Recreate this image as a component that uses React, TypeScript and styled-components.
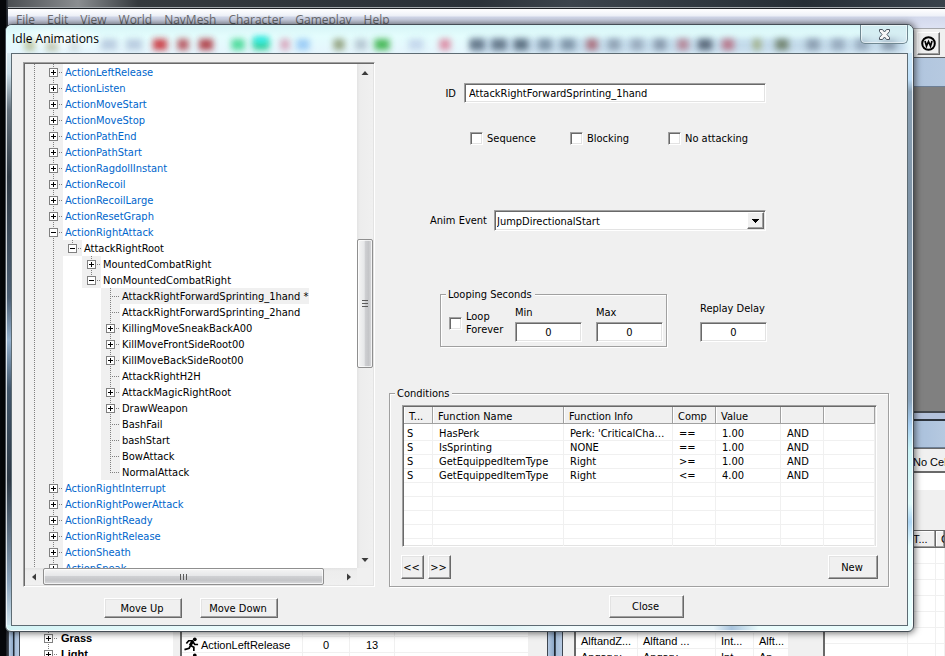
import React from 'react';
import styled, { createGlobalStyle, css } from 'styled-components';

const tahoma = '"DejaVu Sans Condensed", Tahoma, sans-serif';
const segoe = '"Open Sans", "Segoe UI", sans-serif';
const msSans = '"Liberation Sans", Arial, sans-serif';

const Global = createGlobalStyle`
  *, *::before, *::after { box-sizing: border-box; }
  html, body { margin: 0; height: 100%; background: #0b0d10; }
  #root { height: 100%; }
  body { overflow: hidden; font: 11px/13px ${tahoma}; color: #000; }
  button, input, select { font: inherit; color: inherit; margin: 0; }
`;

const sunken = css`
  border: 1px solid;
  border-color: #a0a0a0 #fff #fff #a0a0a0;
  box-shadow: inset 1px 1px 0 #696969, inset -1px -1px 0 #e3e3e3;
`;

/* ---------- Editor behind the dialog ---------- */

const Desktop = styled.main`
  position: relative;
  height: 100%;
  min-height: 600px;
  overflow: hidden;
  display: flex;
  background: linear-gradient(90deg, #05070a 0 6px, #3a4049 7px, #23282d 8px);
`;

const Editor = styled.div`
  flex: 1;
  min-width: 0;
  margin-left: 8px;
  display: flex;
  flex-direction: column;
  font: 11px/14px ${msSans};
`;

const TitleEdge = styled.div`
  height: 8px;
  border-bottom: 1px solid #a3a8ac;
  background: linear-gradient(90deg, #4a4e52, #8b8e91 70px, #34393d 130px, #2a3138 50%, #3c444c 60%, #262e35 85%, #39424b);
`;

const MenuBar = styled.nav`
  height: 20px;
  border-top: 1px solid #1e2226;
  padding: 1px 0 0 8px;
  display: flex;
  gap: 12px;
  background: linear-gradient(#ffffff, #eef1f8 7px, #d3d9ec 8px, #dde2f3);
`;

const MenuButton = styled.button`
  border: 0;
  padding: 0;
  background: none;
  font: 12px/17px ${segoe};
  color: #6c6d70;
`;

const ToolStrip = styled.div`
  height: 30px;
  border-top: 1px solid #a6a8ac;
  border-bottom: 1px solid #5f6266;
  background: #f0f0f0;
  display: flex;
  justify-content: flex-end;
  align-items: center;
  gap: 3px;
  padding-right: 5px;
`;

const ToolButton = styled.button`
  width: 23px;
  height: 23px;
  padding: 0;
  border: 1px solid;
  border-color: #fff #696969 #696969 #fff;
  box-shadow: inset -1px -1px 0 #a0a0a0;
  background: #f0f0f0;
  display: grid;
  place-items: center;
`;

const ChildTitle = styled.div<{ $h: number }>`
  flex: none;
  height: ${p => p.$h}px;
  border-bottom: 1px solid #6d7f96;
  background: linear-gradient(90deg, #b9cadf, #adc3dd 95%, #b6c9e0);
`;

const RenderArea = styled.div`
  flex: none;
  height: 324px;
  background: #808080;
`;

const Divider = styled.div`
  flex: none;
  height: 10px;
  border-top: 2px solid #44484e;
  border-bottom: 2px solid #2d343d;
  background: #b4c2dc;
`;

const LowerPanes = styled.div`
  flex: 1;
  min-height: 0;
  display: flex;
`;

const FrameEdge = styled.div<{ $w: number }>`
  flex: none;
  width: ${p => p.$w}px;
  border: solid #3e4650;
  border-width: 0 1px;
  background: linear-gradient(90deg, #b5c9e2, #8ea9c8 40%, #1f2833 45% 52%, #a5bdd8 58%, #b7cae2);
`;

const ObjectPane = styled.section`
  flex: 0 0 527px;
  display: flex;
  background: #f0f0f0;
`;

const ObjectTree = styled.ul`
  flex: 0 0 153px;
  margin: 0;
  padding: 209px 0 0;
  list-style: none;
  background: #fff;
  font-weight: bold;
`;

const ObjectItem = styled.li`
  height: 16px;
  display: flex;
  align-items: center;
  padding-left: 19px;
  gap: 3px;
  white-space: nowrap;
`;

const ObjectTable = styled.table<{ $top: number }>`
  table-layout: fixed;
  border-collapse: separate;
  border-spacing: 0;
  width: 100%;
  margin-top: ${p => p.$top}px;
  th, td {
    height: 16px;
    padding: 0 0 0 5px;
    border: solid #f0f0f0;
    border-width: 0 1px 1px 0;
    font-weight: normal;
    text-align: left;
    white-space: nowrap;
    overflow: hidden;
    line-height: 14px;
  }
`;

const ListWell = styled.div<{ $w?: number; $ml?: number }>`
  flex: ${p => (p.$w ? `0 0 ${p.$w}px` : '1')};
  min-width: 0;
  margin-left: ${p => p.$ml ?? 0}px;
  border-left: 2px solid #696969;
  background: #fff;
  overflow: hidden;
`;

const ObjCell = styled.td<{ $center?: boolean }>`
  && { text-align: ${p => (p.$center ? 'center' : 'left')}; padding-left: ${p => (p.$center ? 0 : 1)}px; }
`;

const RunnerLabel = styled.span`
  display: flex;
  align-items: center;
  gap: 1px;
`;

const CellPane = styled.section`
  flex: 1;
  min-width: 0;
  display: flex;
  flex-direction: column;
  background: #f0f0f0;
`;

const CellInfo = styled.div`
  flex: none;
  height: 25px;
  border: solid #696969;
  border-width: 1px 0 2px;
  padding: 6px 0 0 350px;
  white-space: nowrap;
`;

const CellFilter = styled.div`
  flex: none;
  height: 58px;
  border-top: 17px solid #fff;
  border-bottom: 1px solid #696969;
`;

const CellLists = styled.div`
  flex: 1;
  min-height: 0;
  display: flex;
`;

const RefHead = styled.th`
  &&& {
    height: 17px;
    border-color: #696969;
    background: #f0f0f0;
    box-shadow: inset -1px -1px 0 #a0a0a0, inset 1px 1px 0 #fff;
    padding-left: 5px;
  }
`;

/* ---------- Dialog frame ---------- */

const Dialog = styled.section`
  position: absolute;
  inset: 24px 31px 24px 5px;
  border: 1px solid #454d55;
  border-radius: 7px 7px 6px 6px;
  box-shadow: 0 0 7px 1px rgba(0, 0, 0, 0.6), inset 0 0 0 1px rgba(255, 255, 255, 0.75);
  padding: 0 5px 5px;
  display: flex;
  flex-direction: column;
  overflow: hidden;
  background:
    linear-gradient(90deg, #d3f3f5, #e8fafb 20%, #f8ffff 45%, #dff3f6 55%, #f4fcfd 62%, #e9f6fb 78%, #a9c4dd 80%, #eafcfc 83%) bottom / 100% 6px no-repeat,
    linear-gradient(#d9f1f7, #bfe0fb 9%, #8aa0b3 11%, #7e93a6 30%, #8aa5bd 62%, #a6cdf0 66%, #c8f3f6 70%, #dffbfb 79%, #add5f3 82%, #e6ffff 86%) right / 6px 100% no-repeat,
    linear-gradient(#eefbfd, #c9dde8 8%, #66737f 14%, #2f3a45 25%, #4c5f74 45%, #93b0cd 52%, #41566b 60%, #2c3845 75%, #8ba4bd 92%, #d9eef5) left / 6px 100% no-repeat,
    #dff6f8;
`;

const DialogTitle = styled.header`
  position: relative;
  flex: none;
  height: 28px;
  margin: 0 -5px;
  padding: 0 5px;
  display: flex;
  justify-content: space-between;
  background: linear-gradient(#d6f4f6, #e4fdfd 40%, #e6f5fd);
`;

const GlassSmear = styled.svg`
  position: absolute;
  inset: 0;
  width: 100%;
  height: 100%;
`;

const TitleText = styled.h1`
  position: relative;
  margin: 0;
  padding: 5px 8px 0 1px;
  font: 12px/17px ${segoe};
  background: radial-gradient(closest-side, rgba(255, 255, 255, 0.8), rgba(255, 255, 255, 0));
`;

const CaptionClose = styled.button`
  position: relative;
  width: 48px;
  height: 19px;
  padding: 0;
  border: 1px solid #6f8791;
  border-top: 0;
  border-radius: 0 0 5px 5px;
  box-shadow: inset 0 0 0 1px rgba(255, 255, 255, 0.5);
  background: rgba(205, 228, 236, 0.5);
  display: grid;
  place-items: center;
`;

const Client = styled.div`
  flex: 1;
  min-height: 0;
  border: 1px solid #5d6b73;
  background: #f0f0f0;
  padding: 8px 18px 7px 11px;
  display: grid;
  grid-template-columns: 352px minmax(0, 1fr);
  grid-template-rows: minmax(0, 1fr) 31px;
  column-gap: 14px;
`;

const Footer = styled.footer<{ $pad: number }>`
  display: flex;
  align-items: flex-end;
  gap: 18px;
  padding-left: ${p => p.$pad}px;
`;

const PushButton = styled.button<{ $w: number; $h: number }>`
  width: ${p => p.$w}px;
  height: ${p => p.$h}px;
  padding: 0 2px 0 0;
  border: 1px solid;
  border-color: #fff #696969 #696969 #fff;
  box-shadow: inset -1px -1px 0 #a0a0a0, inset 1px 1px 0 #e3e3e3;
  background: #f0f0f0;
  text-align: center;
  white-space: nowrap;
`;

/* ---------- Tree ---------- */

const TreeBox = styled.div`
  ${sunken}
  padding: 1px;
  min-height: 0;
  display: grid;
  grid-template-columns: minmax(0, 1fr) 16px;
  grid-template-rows: minmax(0, 1fr) 17px;
  background: #f0f0f0;
`;

const TreeList = styled.ul`
  margin: 0;
  padding: 0;
  list-style: none;
  overflow: hidden;
  background: #fff;
`;

const TreeRow = styled.li`
  height: 16px;
  display: flex;
`;

const Guide = styled.span<{ $blank?: boolean }>`
  flex: none;
  width: 19px;
  height: 16px;
  background: ${p => (p.$blank ? '#fff' : '#f0f0f0')};
`;

const Expander = styled.button`
  flex: none;
  width: 19px;
  height: 16px;
  padding: 0;
  border: 0;
  background: #f0f0f0;
  display: block;
`;

const NodeArt = styled.svg`
  display: block;
  flex: none;
`;

const NodeText = styled.span<{ $link: boolean; $selected: boolean }>`
  height: 16px;
  padding: 1px 1px 0 2px;
  line-height: 16px;
  white-space: pre;
  color: ${p => (p.$link ? '#0066cc' : '#000')};
  background: ${p => (p.$selected ? '#f0f0f0' : 'transparent')};
`;

const ScrollTrack = styled.div<{ $vertical?: boolean }>`
  display: flex;
  flex-direction: ${p => (p.$vertical ? 'column' : 'row')};
  background: linear-gradient(${p => (p.$vertical ? '90deg' : '180deg')}, #e3e3e3, #ededed 3px, #f0f0f0);
`;

const ScrollArrow = styled.button`
  flex: 0 0 17px;
  min-width: 16px;
  padding: 0;
  border: 0;
  background: none;
  display: grid;
  place-items: center;
`;

const ScrollGap = styled.span<{ $grow: number }>`
  flex: ${p => p.$grow} 0 0;
`;

const ScrollThumb = styled.span<{ $grow: number; $vertical?: boolean }>`
  flex: ${p => p.$grow} 0 0;
  border: 1px solid #8f8f8f;
  border-radius: 2px;
  box-shadow: inset 0 0 0 1px rgba(255, 255, 255, 0.7);
  background: linear-gradient(${p => (p.$vertical ? '90deg' : '180deg')}, #f5f5f5, #e6e7e9 45%, #cfd0d3 50%, #c4c5c8 75%, #dadbdd);
  display: grid;
  place-items: center;
`;

/* ---------- Form ---------- */

const Form = styled.form`
  min-height: 0;
  padding-top: 21px;
  display: flex;
  flex-direction: column;
`;

const FieldRow = styled.div<{ $label: number; $gap: number; $top: number }>`
  display: grid;
  grid-template-columns: ${p => p.$label}px minmax(0, 1fr);
  column-gap: ${p => p.$gap}px;
  align-items: center;
  margin-top: ${p => p.$top}px;
  padding-right: 123px;
`;

const FieldLabel = styled.label`
  text-align: right;
`;

const TextBox = styled.input<{ $numeric?: boolean }>`
  ${sunken}
  min-width: 0;
  width: ${p => (p.$numeric ? '67px' : '100%')};
  height: 20px;
  padding: 0 4px;
  border-radius: 0;
  outline: 0;
  background: #fff;
  text-align: ${p => (p.$numeric ? 'center' : 'left')};
`;

const ComboBox = styled.div`
  ${sunken}
  height: 21px;
  padding: 1px;
  display: grid;
  grid-template-columns: minmax(0, 1fr) 17px;
  background: #fff;
`;

const ComboSelect = styled.select`
  grid-area: 1 / 1 / 2 / 3;
  appearance: none;
  border: 0;
  outline: 0;
  padding: 1px 0 0 1px;
  background: transparent;
`;

const ComboArrow = styled.span`
  grid-area: 1 / 2;
  border: 1px solid;
  border-color: #fff #696969 #696969 #fff;
  box-shadow: inset -1px -1px 0 #a0a0a0;
  background: #f0f0f0;
  display: grid;
  place-items: center;
  pointer-events: none;
`;

const CheckRow = styled.div`
  display: grid;
  grid-template-columns: 100px 98px auto;
  margin-top: 29px;
  padding-left: 81px;
`;

const CheckLabel = styled.label`
  display: flex;
  align-items: center;
  gap: 4px;
`;

const CheckBox = styled.input`
  ${sunken}
  appearance: none;
  flex: none;
  width: 13px;
  height: 13px;
  background: #fff;
`;

const TimingRow = styled.div`
  display: flex;
  justify-content: space-between;
  align-items: flex-start;
  margin-top: 57px;
  padding: 0 122px 0 51px;
`;

const Group = styled.fieldset`
  margin: 0;
  min-width: 0;
  padding: 0;
  border: 1px solid #a0a0a0;
  box-shadow: 1px 1px 0 #fff, inset 1px 1px 0 #fff;
`;

const GroupTitle = styled.legend`
  margin-left: 5px;
  padding: 0 3px 0 2px;
  height: 13px;
  background: #f0f0f0;
`;

const LoopBody = styled.div`
  height: 45px;
  padding: 5px 3px 0 8px;
  display: grid;
  grid-template-columns: 52px 67px 67px;
  column-gap: 14px;
`;

const LoopCheck = styled(CheckLabel)`
  align-self: start;
  padding-top: 4px;
`;

const NumberField = styled.div<{ $top?: number; $gap: number }>`
  display: flex;
  flex-direction: column;
  gap: ${p => p.$gap}px;
  padding-top: ${p => p.$top ?? 0}px;
`;

const Conditions = styled(Group)`
  flex: 1;
  min-height: 0;
  margin-top: 40px;
  display: flex;
  flex-direction: column;
`;

const ConditionBody = styled.div`
  flex: 1;
  min-height: 0;
  padding: 5px 11px 7px 12px;
  display: flex;
  flex-direction: column;
`;

const ConditionList = styled.div`
  ${sunken}
  flex: 1;
  min-height: 0;
  padding: 1px;
  background: #fff;
  overflow: hidden;
`;

const ConditionTable = styled.table`
  width: 100%;
  table-layout: fixed;
  border-collapse: separate;
  border-spacing: 0;
`;

const Head = styled.th`
  height: 17px;
  padding: 2px 6px 0 5px;
  border: solid #a0a0a0;
  border-width: 0 1px 1px 0;
  box-shadow: inset 1px 0 0 #fff;
  background: #f0f0f0;
  font-weight: normal;
  text-align: left;
  overflow: hidden;
  text-overflow: ellipsis;
  white-space: nowrap;
`;

const Cell = styled.td<{ $first?: boolean; $lead?: boolean }>`
  height: ${p => (p.$first ? 17 : 14)}px;
  padding: ${p => (p.$first ? 3 : 0)}px 4px 0 ${p => (p.$lead ? 3 : 6)}px;
  border: solid #f0f0f0;
  border-width: 0 1px 1px 0;
  overflow: hidden;
  text-overflow: ellipsis;
  white-space: nowrap;
`;

const ConditionActions = styled.div`
  flex: none;
  display: flex;
  gap: 4px;
  margin: 8px -1px 0;
`;

const Spacer = styled.span`
  flex: 1;
`;

/* ---------- Data ---------- */

type Kind = 'plus' | 'minus' | 'leaf';
type Item = { text: string; depth: number; kind: Kind; last?: boolean; selected?: boolean };

const top = (text: string, kind: Kind = 'plus'): Item => ({ text, depth: 1, kind });
const deep = (text: string, depth: number, kind: Kind, last = false, selected = false): Item => ({ text, depth, kind, last, selected });

const items: Item[] = [
  ...['LeftRelease', 'Listen', 'MoveStart', 'MoveStop', 'PathEnd', 'PathStart', 'RagdollInstant', 'Recoil', 'RecoilLarge', 'ResetGraph'].map(n => top('Action' + n)),
  top('ActionRightAttack', 'minus'),
  deep('AttackRightRoot', 2, 'minus', true),
  deep('MountedCombatRight', 3, 'plus'),
  deep('NonMountedCombatRight', 3, 'minus', true),
  deep('AttackRightForwardSprinting_1hand *', 4, 'leaf', false, true),
  deep('AttackRightForwardSprinting_2hand', 4, 'leaf'),
  deep('KillingMoveSneakBackA00', 4, 'plus'),
  deep('KillMoveFrontSideRoot00', 4, 'plus'),
  deep('KillMoveBackSideRoot00', 4, 'plus'),
  deep('AttackRightH2H', 4, 'leaf'),
  deep('AttackMagicRightRoot', 4, 'plus'),
  deep('DrawWeapon', 4, 'plus'),
  deep('BashFail', 4, 'leaf'),
  deep('bashStart', 4, 'leaf'),
  deep('BowAttack', 4, 'leaf'),
  deep('NormalAttack', 4, 'leaf', true),
  ...['RightInterrupt', 'RightPowerAttack', 'RightReady', 'RightRelease', 'Sheath', 'Sneak'].map(n => top('Action' + n)),
];

const conditions = [
  ['S', 'HasPerk', "Perk: 'CriticalCharge'", '==', '1.00', 'AND', ''],
  ['S', 'IsSprinting', 'NONE', '==', '1.00', 'AND', ''],
  ['S', 'GetEquippedItemType', 'Right', '>=', '1.00', 'AND', ''],
  ['S', 'GetEquippedItemType', 'Right', '<=', '4.00', 'AND', ''],
];
const blankRow = ['', '', '', '', '', '', ''];

/* Centre x, colour and width of each toolbar icon showing through the glass. */
const smears: [number, string, number][] = [
  [24, '#a3ad78', 10], [46, '#959f78', 12], [68, '#b9c6cd', 10], [103, '#b3c6dc', 16], [128, '#b3c6dc', 16],
  [154, '#c8202c', 14], [177, '#b04048', 11], [200, '#a92532', 14], [232, '#35d68a', 13], [255, '#12c98a', 16],
  [279, '#d69ab4', 9], [297, '#8fc4f4', 13], [333, '#87966f', 11], [355, '#afc0cc', 12], [376, '#2fae3c', 15],
  [410, '#c0d3ea', 15], [439, '#dc7f9a', 11], [471, '#56697c', 15], [493, '#56697c', 15], [515, '#4e6072', 14],
  [539, '#748a9e', 13], [562, '#748a9e', 14], [586, '#a8626e', 11], [608, '#8799ab', 12], [631, '#92a3b6', 12],
  [654, '#7f8fa2', 12], [677, '#b47a8c', 11], [699, '#4c586b', 14], [722, '#b76a7e', 12], [751, '#9cac7c', 8],
  [776, '#66785f', 13], [807, '#8395a8', 13], [832, '#8fa2b6', 13], [856, '#8fa2b6', 13], [883, '#8092a4', 14],
];

/* ---------- Drawings ---------- */

const NodeDrawing = ({ kind, last }: { kind: Kind | 'line'; last?: boolean }) => (
  <NodeArt width="19" height="16" viewBox="0 0 19 16" shapeRendering="crispEdges" aria-hidden="true">
    <path d={last ? 'M9.5 0V8' : 'M9.5 0V16'} stroke="#808080" strokeDasharray="1 1" />
    {kind !== 'line' && <path d="M9 8.5H19" stroke="#808080" strokeDasharray="1 1" />}
    {(kind === 'plus' || kind === 'minus') && (
      <>
        <rect x="5.5" y="4.5" width="8" height="8" fill="#fff" stroke="#808080" />
        <path d="M7 8.5H12" stroke="#000" />
        {kind === 'plus' && <path d="M9.5 6V11" stroke="#000" />}
      </>
    )}
  </NodeArt>
);

const Runner = () => (
  <svg width="17" height="15" viewBox="0 0 17 16" aria-hidden="true">
    <circle cx="12" cy="2.5" r="2" fill="#000" />
    <path d="M10 4L5.5 4L3 7M10 4.5L7.5 9L11 11L11 15M7.5 9L6 12L1 13.5M10 5L12 8H15.5" fill="none" stroke="#000" strokeWidth="1.8" />
    <path d="M10 4L7 9" stroke="#000" strokeWidth="3" />
  </svg>
);

const Arrow = ({ d }: { d: string }) => (
  <svg width="8" height="8" viewBox="0 0 8 8" aria-hidden="true"><path d={d} fill="#3c3c3c" /></svg>
);

const TreeNode = ({ item }: { item: Item }) => (
  <TreeRow role="treeitem" aria-level={item.depth} aria-selected={!!item.selected}>
    {Array.from({ length: item.depth }, (_, level) => {
      const blank = level > 1;
      return <Guide key={level} $blank={blank}>{!blank && <NodeDrawing kind="line" />}</Guide>;
    })}
    {item.kind === 'leaf' ? (
      <Guide><NodeDrawing kind="leaf" last={item.last} /></Guide>
    ) : (
      <Expander type="button" aria-label={`${item.kind === 'plus' ? 'Expand' : 'Collapse'} ${item.text}`}>
        <NodeDrawing kind={item.kind} last={item.last} />
      </Expander>
    )}
    <NodeText $link={item.depth === 1} $selected={!!item.selected}>{item.text}</NodeText>
  </TreeRow>
);

const Check = ({ label }: { label: string }) => (
  <CheckLabel><CheckBox type="checkbox" />{label}</CheckLabel>
);

/* ---------- Page ---------- */

const EditorBackdrop = () => (
  <Editor>
    <TitleEdge />
    <MenuBar>
      {['File', 'Edit', 'View', 'World', 'NavMesh', 'Character', 'Gameplay', 'Help'].map(m => <MenuButton key={m}>{m}</MenuButton>)}
    </MenuBar>
    <ToolStrip>
      <ToolButton aria-label="Warnings">
        <svg width="15" height="15" viewBox="0 0 15 15" aria-hidden="true">
          <circle cx="7.5" cy="7.5" r="6.3" fill="none" stroke="#000" strokeWidth="2" />
          <path d="M4 5L5.5 10L7.5 5.5L9.5 10L11 5" fill="none" stroke="#000" strokeWidth="1.7" />
        </svg>
      </ToolButton>
    </ToolStrip>
    <ChildTitle $h={29} />
    <RenderArea />
    <Divider />
    <LowerPanes>
      <FrameEdge $w={12} />
      <ObjectPane>
        <ObjectTree>
          {['Grass', 'Light'].map(n => (
            <ObjectItem key={n}><NodeDrawing kind="plus" /><span>{n}</span></ObjectItem>
          ))}
        </ObjectTree>
        <ListWell $w={349} $ml={7}>
          <ObjectTable $top={200}>
            <colgroup><col width="121" /><col width="47" /><col width="45" /><col /></colgroup>
            <tbody>
              {[['', '', ''], ['ActionLeftRelease', '0', '13']].map(r => (
                <tr key={r[0]}>
                  <ObjCell>{r[0] && <RunnerLabel><Runner />{r[0]}</RunnerLabel>}</ObjCell>
                  <ObjCell $center>{r[1]}</ObjCell>
                  <ObjCell $center>{r[2]}</ObjCell>
                  <ObjCell />
                </tr>
              ))}
              <tr><ObjCell><RunnerLabel><Runner /></RunnerLabel></ObjCell><ObjCell /><ObjCell /><ObjCell /></tr>
            </tbody>
          </ObjectTable>
        </ListWell>
      </ObjectPane>
      <FrameEdge $w={16} />
      <CellPane>
        <ChildTitle $h={27} />
        <CellInfo>No Cell Selected</CellInfo>
        <CellFilter />
        <CellLists>
          <ListWell $w={215} $ml={11}>
            <ObjectTable $top={102}>
              <colgroup><col width="62" /><col width="78" /><col width="38" /><col /></colgroup>
              <tbody>
                <tr><td>AlftandZ...</td><td>Alftand ...</td><td>Int...</td><td>Alft...</td></tr>
                <tr><td>Angaryu...</td><td>Angary...</td><td>Int...</td><td>An...</td></tr>
              </tbody>
            </ObjectTable>
          </ListWell>
          <ListWell $ml={34}>
            <ObjectTable $top={0}>
              <colgroup><col width="83" /><col width="28" /><col /></colgroup>
              <thead><tr><RefHead /><RefHead>T...</RefHead><RefHead>C</RefHead></tr></thead>
              <tbody>
                {Array.from({ length: 7 }, (_, i) => <tr key={i}><td /><td /><td /></tr>)}
              </tbody>
            </ObjectTable>
          </ListWell>
        </CellLists>
      </CellPane>
    </LowerPanes>
  </Editor>
);

export default function App() {
  return (
    <>
      <Global />
      <Desktop>
        <EditorBackdrop />
        <Dialog role="dialog" aria-labelledby="dialog-title">
          <DialogTitle>
            <GlassSmear aria-hidden="true">
              <defs><filter id="glass" x="-100%" y="-100%" width="300%" height="300%"><feGaussianBlur stdDeviation="3" /></filter></defs>
              <rect x="465" y="13" width="435" height="15" fill="#a9c3dc" opacity="0.55" filter="url(#glass)" />
              {smears.map(([x, fill, w]) => (
                <rect key={x} x={x - w / 2} y="14" width={w} height="11" fill={fill} opacity="0.85" filter="url(#glass)" />
              ))}
              <rect x="248" y="12" width="14" height="6" fill="#22f0f0" filter="url(#glass)" />
            </GlassSmear>
            <TitleText id="dialog-title">Idle Animations</TitleText>
            <CaptionClose aria-label="Close window">
              <svg width="13" height="11" viewBox="0 0 13 11" aria-hidden="true">
                <path d="M1.5 .5H4.5L6.5 3L8.5 .5H11.5V2.5L9 5.5L11.5 8.5V10.5H8.5L6.5 8L4.5 10.5H1.5V8.5L4 5.5L1.5 2.5Z" fill="#f7f7f7" stroke="#4b5560" />
              </svg>
            </CaptionClose>
          </DialogTitle>
          <Client>
            <TreeBox>
              <TreeList role="tree" aria-label="Idle animations">
                {items.map(item => <TreeNode key={item.text} item={item} />)}
              </TreeList>
              <ScrollTrack $vertical>
                <ScrollArrow type="button" aria-label="Scroll up"><Arrow d="M0.5 6L4 2L7.5 6Z" /></ScrollArrow>
                <ScrollGap $grow={159} />
                <ScrollThumb $grow={127} $vertical>
                  <svg width="8" height="9" viewBox="0 0 8 9" shapeRendering="crispEdges" aria-hidden="true"><path d="M1 1.5H7M1 4.5H7M1 7.5H7" stroke="#5b5b5b" /></svg>
                </ScrollThumb>
                <ScrollGap $grow={184} />
                <ScrollArrow type="button" aria-label="Scroll down"><Arrow d="M0.5 2L4 6L7.5 2Z" /></ScrollArrow>
              </ScrollTrack>
              <ScrollTrack>
                <ScrollArrow type="button" aria-label="Scroll left"><Arrow d="M6 0.5L2 4L6 7.5Z" /></ScrollArrow>
                <ScrollGap $grow={1} />
                <ScrollThumb $grow={281}>
                  <svg width="9" height="8" viewBox="0 0 9 8" shapeRendering="crispEdges" aria-hidden="true"><path d="M1.5 1V7M4.5 1V7M7.5 1V7" stroke="#5b5b5b" /></svg>
                </ScrollThumb>
                <ScrollGap $grow={16} />
                <ScrollArrow type="button" aria-label="Scroll right"><Arrow d="M2 0.5L6 4L2 7.5Z" /></ScrollArrow>
              </ScrollTrack>
            </TreeBox>
            <Form onSubmit={e => e.preventDefault()}>
              <FieldRow $label={67} $gap={8} $top={0}>
                <FieldLabel htmlFor="idle-id">ID</FieldLabel>
                <TextBox id="idle-id" defaultValue="AttackRightForwardSprinting_1hand" />
              </FieldRow>
              <CheckRow>
                <Check label="Sequence" />
                <Check label="Blocking" />
                <Check label="No attacking" />
              </CheckRow>
              <FieldRow $label={98} $gap={7} $top={65}>
                <FieldLabel htmlFor="anim-event">Anim Event</FieldLabel>
                <ComboBox>
                  <ComboSelect id="anim-event"><option>JumpDirectionalStart</option></ComboSelect>
                  <ComboArrow>
                    <svg width="7" height="4" viewBox="0 0 7 4" shapeRendering="crispEdges" aria-hidden="true"><path d="M0 0H7V1H6V2H5V3H4V4H3V3H2V2H1V1H0Z" /></svg>
                  </ComboArrow>
                </ComboBox>
              </FieldRow>
              <TimingRow>
                <Group>
                  <GroupTitle>Looping Seconds</GroupTitle>
                  <LoopBody>
                    <LoopCheck><CheckBox type="checkbox" /><span>Loop<br />Forever</span></LoopCheck>
                    <NumberField $gap={3}>
                      <label htmlFor="loop-min">Min</label>
                      <TextBox id="loop-min" $numeric defaultValue="0" />
                    </NumberField>
                    <NumberField $gap={3}>
                      <label htmlFor="loop-max">Max</label>
                      <TextBox id="loop-max" $numeric defaultValue="0" />
                    </NumberField>
                  </LoopBody>
                </Group>
                <NumberField $top={14} $gap={7}>
                  <label htmlFor="replay-delay">Replay Delay</label>
                  <TextBox id="replay-delay" $numeric defaultValue="0" />
                </NumberField>
              </TimingRow>
              <Conditions>
                <GroupTitle>Conditions</GroupTitle>
                <ConditionBody>
                  <ConditionList>
                    <ConditionTable>
                      <colgroup><col width="29" /><col width="131" /><col width="109" /><col width="43" /><col width="65" /><col width="43" /><col /></colgroup>
                      <thead>
                        <tr>{['T...', 'Function Name', 'Function Info', 'Comp', 'Value', '', ''].map((h, i) => <Head key={i}>{h}</Head>)}</tr>
                      </thead>
                      <tbody>
                        {[...conditions, blankRow, blankRow, blankRow, blankRow, blankRow].map((row, r) => (
                          <tr key={r}>{row.map((value, c) => <Cell key={c} $first={r === 0} $lead={c === 0}>{value}</Cell>)}</tr>
                        ))}
                      </tbody>
                    </ConditionTable>
                  </ConditionList>
                  <ConditionActions>
                    <PushButton type="button" $w={23} $h={24}>&lt;&lt;</PushButton>
                    <PushButton type="button" $w={23} $h={24}>&gt;&gt;</PushButton>
                    <Spacer />
                    <PushButton type="button" $w={50} $h={24}>New</PushButton>
                  </ConditionActions>
                </ConditionBody>
              </Conditions>
            </Form>
            <Footer $pad={81}>
              <PushButton type="button" $w={78} $h={20}>Move Up</PushButton>
              <PushButton type="button" $w={78} $h={20}>Move Down</PushButton>
            </Footer>
            <Footer $pad={220}>
              <PushButton type="button" $w={75} $h={23}>Close</PushButton>
            </Footer>
          </Client>
        </Dialog>
      </Desktop>
    </>
  );
}
